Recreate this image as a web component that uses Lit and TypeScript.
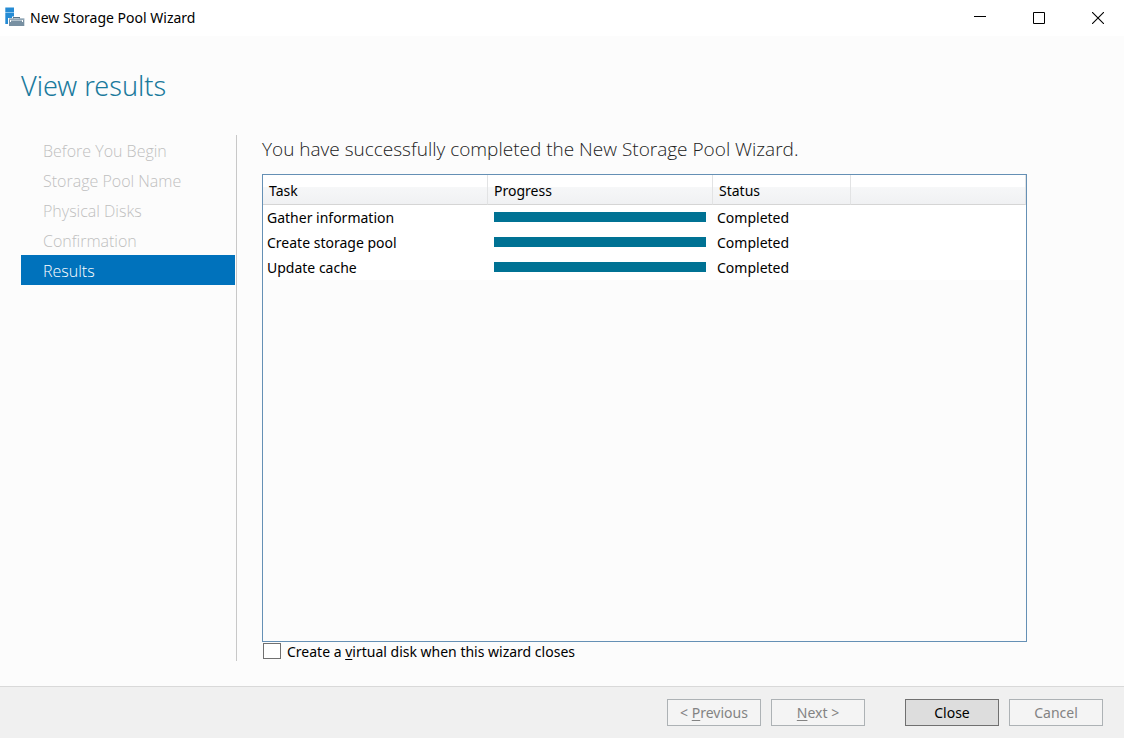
import { LitElement, html, css } from "lit";
import { customElement, state } from "lit/decorators.js";

interface Task {
  name: string;
  progress: number;
  status: string;
}

@customElement("app-root")
export class AppRoot extends LitElement {
  static styles = css`
    :host {
      display: flex;
      flex-direction: column;
      min-height: 100vh;
      box-sizing: border-box;
      background: #fcfcfc;
      color: #000;
      font: 14px/20px "Noto Sans", "Open Sans", sans-serif;
    }
    * {
      box-sizing: border-box;
    }
    .titlebar {
      display: flex;
      align-items: center;
      height: 36px;
      padding: 0 3px 0 4px;
      background: #fff;
    }
    .app-icon {
      width: 22px;
      height: 22px;
      margin-right: 4px;
    }
    .window-title {
      flex: 1;
    }
    .window-buttons {
      display: flex;
      gap: 13px;
    }
    .window-button {
      display: flex;
      align-items: center;
      justify-content: center;
      width: 46px;
      height: 34px;
      padding: 0;
      border: 0;
      background: none;
    }
    h1 {
      margin: 0;
      padding: 30px 21px 0;
      font-size: 27px;
      line-height: 40px;
      font-weight: 300;
      color: #1a7a9c;
    }
    .body {
      flex: 1;
      display: flex;
      padding: 29px 97px 25px 21px;
    }
    .steps {
      flex: none;
      width: 216px;
      padding-right: 1px;
      border-right: 1px solid #c8c8c8;
      font-family: "Open Sans", "Noto Sans", sans-serif;
      font-weight: 300;
      font-size: 16px;
    }
    .steps ol {
      margin: 0;
      padding: 0;
      list-style: none;
    }
    .step {
      height: 30px;
      padding: 0 22px;
      line-height: 32px;
      color: #bfbfbf;
    }
    .step.current {
      background: #0072bc;
      color: #fff;
    }
    .results {
      flex: 1;
      min-width: 0;
      display: flex;
      flex-direction: column;
      margin-left: 25px;
    }
    h2 {
      margin: 0;
      height: 39px;
      font-family: "Open Sans", "Noto Sans", sans-serif;
      font-size: 19px;
      line-height: 28px;
      font-weight: 300;
      color: #222;
    }
    .list {
      flex: 1;
      border: 1px solid #6590b5;
    }
    table {
      width: 100%;
      table-layout: fixed;
      border-collapse: separate;
      border-spacing: 0;
    }
    .col-wide {
      width: 225px;
    }
    .col-status {
      width: 138px;
    }
    th {
      height: 30px;
      padding: 2px 6px 0;
      text-align: left;
      font-weight: 400;
      border-right: 1px solid #e2e3e4;
      border-bottom: 1px solid #d5d5d5;
      background: linear-gradient(#fff 0 12px, #f6f7f8 12px, #f0f1f3 100%);
    }
    td {
      height: 25px;
      padding: 0 4px;
      background: #fff;
    }
    td.progress-cell {
      padding: 0 7px 2px 6px;
    }
    .bar {
      height: 10px;
      background: #dfe8eb;
    }
    .fill {
      height: 100%;
      background: #007294;
    }
    .option {
      display: flex;
      align-items: center;
      gap: 6px;
      height: 19px;
      padding-left: 1px;
    }
    .option input {
      appearance: none;
      width: 18px;
      height: 16px;
      margin: 0 0 1px;
      border: 1px solid #707070;
      background: #fff;
    }
    .option input:checked {
      background: #0072bc;
    }
    u {
      text-underline-offset: 2px;
      text-decoration-skip-ink: none;
    }
    .footer {
      display: flex;
      justify-content: flex-end;
      gap: 10px;
      padding: 12px 21px;
      border-top: 1px solid #d9d9d9;
      background: #f0f0f0;
    }
    .action {
      width: 94px;
      height: 27px;
      padding: 0;
      border: 1px solid #adb2b5;
      background: #f4f4f4;
      color: #838383;
      font: inherit;
    }
    .action.primary {
      margin-left: 30px;
      border-color: #707070;
      background: #ddd;
      color: #000;
    }
  `;

  @state() private createDisk = false;

  private steps = [
    "Before You Begin",
    "Storage Pool Name",
    "Physical Disks",
    "Confirmation",
    "Results",
  ];

  private tasks: Task[] = [
    { name: "Gather information", progress: 100, status: "Completed" },
    { name: "Create storage pool", progress: 100, status: "Completed" },
    { name: "Update cache", progress: 100, status: "Completed" },
  ];

  render() {
    return html`
      <header class="titlebar">
        <svg class="app-icon" viewBox="0 0 22 22" aria-hidden="true">
          <path fill="#258bd4" d="M1.3 .5h8.7v4.5H1.3zM1.3 6h8.7v3.5H8V11H4v6H1.3z" />
          <path fill="#8cc4ec" d="M1.3 5h8.7v1H1.3z" />
          <path fill="#7890a2" d="M5 11.5h15.3v7.5H5z" />
          <path fill="#5c7486" d="M9 10h7v1.500h-1V11h-5v.5H9z" />
          <path fill="#a8bac6" d="M5 11.500h15.300v1H5z" />
          <path fill="#fff" d="M6 13h1v2H6zM18 13h1v2h-1z" />
          <path fill="#b4c3cd" d="M7 13h11v1H7z" />
        </svg>
        <span class="window-title">New Storage Pool Wizard</span>
        <div class="window-buttons">
          <button class="window-button" aria-label="Minimize">
            <svg width="12" height="12">
              <path d="M0 4.5h12" stroke="#000" />
            </svg>
          </button>
          <button class="window-button" aria-label="Maximize">
            <svg width="12" height="12">
              <path d="M.5.5h11v11H.5z" fill="none" stroke="#000" />
            </svg>
          </button>
          <button class="window-button" aria-label="Close window">
            <svg width="12" height="12">
              <path d="M0 0l12 12M12 0L0 12" stroke="#000" stroke-width="1.1" />
            </svg>
          </button>
        </div>
      </header>
      <h1>View results</h1>
      <main class="body">
        <nav class="steps" aria-label="Wizard steps">
          <ol>
            ${this.steps.map((s, i) =>
              i === this.steps.length - 1
                ? html`<li class="step current" aria-current="step">${s}</li>`
                : html`<li class="step">${s}</li>`
            )}
          </ol>
        </nav>
        <section class="results">
          <h2>You have successfully completed the New Storage Pool Wizard.</h2>
          <div class="list">
            <table>
              <colgroup>
                <col class="col-wide" />
                <col class="col-wide" />
                <col class="col-status" />
                <col />
              </colgroup>
              <thead>
                <tr>
                  <th>Task</th>
                  <th>Progress</th>
                  <th>Status</th>
                  <th></th>
                </tr>
              </thead>
              <tbody>
                ${this.tasks.map(
                  (t) => html`<tr>
                    <td>${t.name}</td>
                    <td class="progress-cell">
                      <div class="bar">
                        <div class="fill" style="width:${t.progress}%"></div>
                      </div>
                    </td>
                    <td>${t.status}</td>
                    <td></td>
                  </tr>`
                )}
              </tbody>
            </table>
          </div>
          <label class="option">
            <input
              type="checkbox"
              .checked=${this.createDisk}
              @change=${(e: Event) =>
                (this.createDisk = (e.target as HTMLInputElement).checked)}
            />
            <span>Create a <u>v</u>irtual disk when this wizard closes</span>
          </label>
        </section>
      </main>
      <footer class="footer">
        <button class="action" disabled>&lt; <u>P</u>revious</button>
        <button class="action" disabled><u>N</u>ext &gt;</button>
        <button class="action primary">Close</button>
        <button class="action" disabled>Cancel</button>
      </footer>
    `;
  }
}
